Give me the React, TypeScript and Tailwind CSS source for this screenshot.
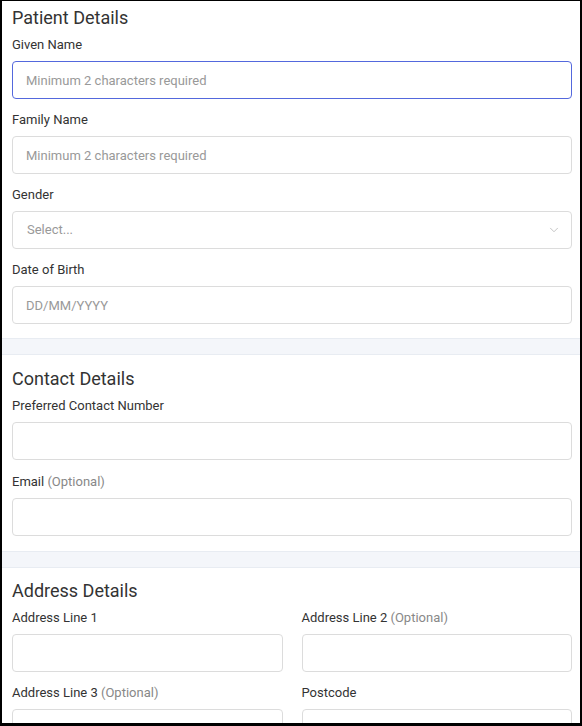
import { ChevronDown } from "lucide-react"

function Label({ text, optional }: { text: string; optional?: boolean }) {
  return (
    <div className="h-[20px] mb-[7px] text-[13px] leading-[22px] font-normal text-[#333]">
      {text}
      {optional && <span className="text-[#888]"> (Optional)</span>}
    </div>
  )
}

function TextField({
  label,
  optional,
  placeholder,
  focused,
}: {
  label: string
  optional?: boolean
  placeholder?: string
  focused?: boolean
}) {
  return (
    <div>
      <Label text={label} optional={optional} />
      <input
        placeholder={placeholder}
        className={
          focused
            ? "block w-full h-[38px] rounded-[4px] border border-[#5468dd] px-[13px] text-[13px] text-[#333] placeholder:text-[#999] outline-none bg-white"
            : "block w-full h-[38px] rounded-[4px] border border-[#dcdcdc] px-[13px] text-[13px] text-[#333] placeholder:text-[#999] outline-none bg-white"
        }
      />
    </div>
  )
}

function SelectField({ label }: { label: string }) {
  return (
    <div>
      <Label text={label} />
      <div className="flex items-center justify-between h-[38px] rounded-[4px] border border-[#dcdcdc] pl-[14px] pr-[10px] bg-white">
        <span className="text-[13px] text-[#999]">Select...</span>
        <ChevronDown size={14} strokeWidth={1.5} className="text-[#bbb]" />
      </div>
    </div>
  )
}

function Band() {
  return <div className="h-[17px] bg-[#f4f6fa] border-y border-[#e8ecf2] -ml-[10px] -mr-[8px]" />
}

function Heading({ children }: { children: string }) {
  return <h2 className="h-[24px] mb-[4px] text-[18px] leading-[24px] font-normal text-[#333]">{children}</h2>
}

export default function App() {
  return (
    <div
      className="w-[582px] h-[726px] overflow-hidden bg-white border-t border-l-2 border-r-2 border-b-[3px] border-black"
      style={{ fontFamily: "Roboto, 'Liberation Sans', sans-serif" }}
    >
      <div className="pl-[10px] pr-[8px]">
        <section className="pt-[5px] pb-[14px]">
          <Heading>Patient Details</Heading>
          <div className="flex flex-col gap-[10px]">
            <TextField label="Given Name" placeholder="Minimum 2 characters required" focused />
            <TextField label="Family Name" placeholder="Minimum 2 characters required" />
            <SelectField label="Gender" />
            <TextField label="Date of Birth" placeholder="DD/MM/YYYY" />
          </div>
        </section>

        <Band />

        <section className="pt-[12px] pb-[15px]">
          <Heading>Contact Details</Heading>
          <div className="flex flex-col gap-[11px]">
            <TextField label="Preferred Contact Number" />
            <TextField label="Email" optional />
          </div>
        </section>

        <Band />

        <section className="pt-[11px] pb-[15px]">
          <Heading>Address Details</Heading>
          <div className="grid grid-cols-2 gap-x-[19px] gap-y-[10px]">
            <TextField label="Address Line 1" />
            <TextField label="Address Line 2" optional />
            <TextField label="Address Line 3" optional />
            <TextField label="Postcode" />
          </div>
        </section>
      </div>
    </div>
  )
}
